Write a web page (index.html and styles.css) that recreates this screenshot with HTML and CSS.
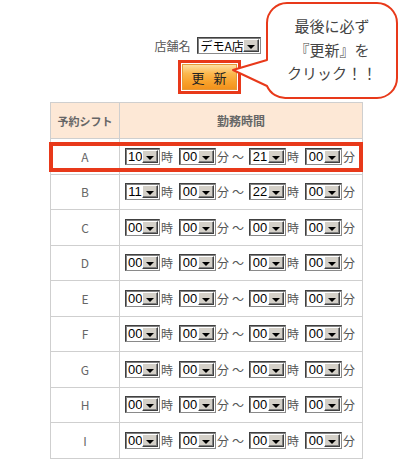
FILE: index.html
```html
<!DOCTYPE html>
<html lang="ja">
<head>
<meta charset="utf-8">
<link rel="stylesheet" href="styles.css">
</head>
<body>
<div class="page">
  <div class="content">
    <div class="store">
      <span class="label">店舗名</span>
      <span class="sel store-sel"><span class="v">デモA店</span><span class="b"></span></span>
    </div>
    <div class="actions">
      <span class="btn-frame"><span class="btn">更&nbsp;&nbsp;新</span></span>
    </div>
    <table class="shifts">
      <thead>
        <tr><th class="c1">予約シフト</th><th>勤務時間</th></tr>
      </thead>
      <tbody>
        <tr><td class="c1">A</td><td><div class="time"><span class="sel h1"><span class="v">10</span><span class="b"></span></span><span class="u">時</span><span class="sel m"><span class="v">00</span><span class="b"></span></span><span class="u">分</span><span class="tilde">～</span><span class="sel h2"><span class="v">21</span><span class="b"></span></span><span class="u">時</span><span class="sel m"><span class="v">00</span><span class="b"></span></span><span class="u">分</span></div></td></tr>
        <tr><td class="c1">B</td><td><div class="time"><span class="sel h1"><span class="v">11</span><span class="b"></span></span><span class="u">時</span><span class="sel m"><span class="v">00</span><span class="b"></span></span><span class="u">分</span><span class="tilde">～</span><span class="sel h2"><span class="v">22</span><span class="b"></span></span><span class="u">時</span><span class="sel m"><span class="v">00</span><span class="b"></span></span><span class="u">分</span></div></td></tr>
        <tr><td class="c1">C</td><td><div class="time"><span class="sel h1"><span class="v">00</span><span class="b"></span></span><span class="u">時</span><span class="sel m"><span class="v">00</span><span class="b"></span></span><span class="u">分</span><span class="tilde">～</span><span class="sel h2"><span class="v">00</span><span class="b"></span></span><span class="u">時</span><span class="sel m"><span class="v">00</span><span class="b"></span></span><span class="u">分</span></div></td></tr>
        <tr><td class="c1">D</td><td><div class="time"><span class="sel h1"><span class="v">00</span><span class="b"></span></span><span class="u">時</span><span class="sel m"><span class="v">00</span><span class="b"></span></span><span class="u">分</span><span class="tilde">～</span><span class="sel h2"><span class="v">00</span><span class="b"></span></span><span class="u">時</span><span class="sel m"><span class="v">00</span><span class="b"></span></span><span class="u">分</span></div></td></tr>
        <tr><td class="c1">E</td><td><div class="time"><span class="sel h1"><span class="v">00</span><span class="b"></span></span><span class="u">時</span><span class="sel m"><span class="v">00</span><span class="b"></span></span><span class="u">分</span><span class="tilde">～</span><span class="sel h2"><span class="v">00</span><span class="b"></span></span><span class="u">時</span><span class="sel m"><span class="v">00</span><span class="b"></span></span><span class="u">分</span></div></td></tr>
        <tr><td class="c1">F</td><td><div class="time"><span class="sel h1"><span class="v">00</span><span class="b"></span></span><span class="u">時</span><span class="sel m"><span class="v">00</span><span class="b"></span></span><span class="u">分</span><span class="tilde">～</span><span class="sel h2"><span class="v">00</span><span class="b"></span></span><span class="u">時</span><span class="sel m"><span class="v">00</span><span class="b"></span></span><span class="u">分</span></div></td></tr>
        <tr><td class="c1">G</td><td><div class="time"><span class="sel h1"><span class="v">00</span><span class="b"></span></span><span class="u">時</span><span class="sel m"><span class="v">00</span><span class="b"></span></span><span class="u">分</span><span class="tilde">～</span><span class="sel h2"><span class="v">00</span><span class="b"></span></span><span class="u">時</span><span class="sel m"><span class="v">00</span><span class="b"></span></span><span class="u">分</span></div></td></tr>
        <tr><td class="c1">H</td><td><div class="time"><span class="sel h1"><span class="v">00</span><span class="b"></span></span><span class="u">時</span><span class="sel m"><span class="v">00</span><span class="b"></span></span><span class="u">分</span><span class="tilde">～</span><span class="sel h2"><span class="v">00</span><span class="b"></span></span><span class="u">時</span><span class="sel m"><span class="v">00</span><span class="b"></span></span><span class="u">分</span></div></td></tr>
        <tr><td class="c1">I</td><td><div class="time"><span class="sel h1"><span class="v">00</span><span class="b"></span></span><span class="u">時</span><span class="sel m"><span class="v">00</span><span class="b"></span></span><span class="u">分</span><span class="tilde">～</span><span class="sel h2"><span class="v">00</span><span class="b"></span></span><span class="u">時</span><span class="sel m"><span class="v">00</span><span class="b"></span></span><span class="u">分</span></div></td></tr>
      </tbody>
    </table>
  </div>

  <div class="highlight"></div>

  <div class="callout">
    <svg class="bubble" width="176" height="105" viewBox="0 0 176 105">
      <path d="M57 3 H147 A20 20 0 0 1 167 23 V78 A20 20 0 0 1 147 98 H57 A20 20 0 0 1 37 86 L3 70 L37 60 V23 A20 20 0 0 1 57 3 Z" fill="#fff" stroke="#e8391a" stroke-width="2" stroke-linejoin="round"/>
    </svg>
    <div class="msg">最後に必ず<br>『更新』を<br>クリック！！</div>
  </div>
</div>
</body>
</html>
```

FILE: styles.css
```css
html, body {
  margin: 0;
  padding: 0;
  background: #fff;
}

body {
  font-family: "Noto Sans CJK JP", "DejaVu Sans", sans-serif;
  font-size: 12px;
  color: #555;
}

.page {
  position: relative;
  width: 406px;
  height: 461px;
  overflow: hidden;
}

.content {
  width: 312px;
  margin-left: 50px;
  padding-top: 37px;
}

.store {
  display: flex;
  justify-content: center;
  align-items: center;
  gap: 6px;
  height: 17px;
  padding-left: 3px;
}

.label {
  color: #555;
  font-size: 12px;
  line-height: 17px;
}

/* classic select look */
.sel {
  display: inline-flex;
  align-items: stretch;
  box-sizing: border-box;
  height: 17px;
  width: 37px;
  border: 1px solid #404040;
  border-right-color: #8a8a8a;
  border-bottom-color: #8a8a8a;
  box-shadow: inset 1px 1px 0 #808080;
  background: #fff;
  overflow: hidden;
}

.sel .v {
  flex: 1 1 auto;
  min-width: 0;
  overflow: hidden;
  white-space: nowrap;
  font-family: "Liberation Sans", Arial, sans-serif;
  font-size: 13px;
  line-height: 15px;
  color: #000;
  padding-left: 2px;
}

.sel .b {
  position: relative;
  flex: 0 0 16px;
  width: 16px;
  box-sizing: border-box;
  margin: 1px 1px 1px 0;
  background: #d4d0c8;
  border: 1px solid;
  border-color: #fff #404040 #404040 #fff;
  box-shadow: inset -1px -1px 0 #808080;
}

.sel .b::after {
  content: "";
  position: absolute;
  left: 3px;
  top: 5px;
  border-left: 4px solid transparent;
  border-right: 4px solid transparent;
  border-top: 4px solid #000;
}

.store-sel {
  width: 64px;
}

.store-sel .v {
  font-family: "Noto Sans CJK JP", sans-serif;
  font-size: 12px;
  line-height: 15px;
  padding-left: 3px;
}

.sel.h1 {
  width: 35px;
}

.actions {
  display: flex;
  justify-content: center;
  margin-top: 6px;
  padding-left: 7px;
}

.btn-frame {
  display: inline-flex;
  box-sizing: border-box;
  width: 63px;
  height: 34px;
  border: 3px solid #e8391a;
  padding: 1px;
  background: #fff;
}

.btn {
  flex: 1;
  display: flex;
  align-items: center;
  justify-content: center;
  box-sizing: border-box;
  border: 1px solid #e59a3a;
  background: linear-gradient(to bottom, #fde0a2 0%, #fbb84f 35%, #f8a22c 70%, #f3921c 100%);
  font-size: 13px;
  color: #222;
  letter-spacing: 1px;
}

.shifts {
  margin-top: 8px;
  width: 313px;
  border-collapse: collapse;
  table-layout: fixed;
}

.shifts th,
.shifts td {
  border: 1px solid #cfcfcf;
  padding: 0;
  text-align: center;
  vertical-align: middle;
}

.shifts th {
  height: 35px;
  background: #fde8d6;
  color: #666;
  font-weight: bold;
  font-size: 12px;
}

.shifts th.c1 {
  font-size: 11px;
}

.shifts td {
  height: 34.5px;
}

.shifts .c1 {
  width: 68px;
  color: #666;
  font-size: 12px;
}

.time {
  display: flex;
  align-items: center;
  padding-left: 5px;
  height: 17px;
}

.u {
  width: 12px;
  font-size: 12px;
  line-height: 17px;
  color: #555;
  margin-left: 1px;
}

.u + .sel {
  margin-left: 6px;
}

.tilde {
  margin-left: 3px;
  margin-right: 5px;
  width: 12px;
  font-size: 12px;
  color: #555;
}

.highlight {
  position: absolute;
  left: 49px;
  top: 142px;
  width: 314px;
  height: 30px;
  box-sizing: border-box;
  border: 4px solid #e8391a;
}

.callout {
  position: absolute;
  left: 230px;
  top: 0;
  width: 176px;
  height: 105px;
}

.bubble {
  display: block;
}

.msg {
  position: absolute;
  left: 37px;
  top: 14px;
  width: 130px;
  text-align: center;
  font-size: 15px;
  line-height: 23.5px;
  color: #444;
}
```
